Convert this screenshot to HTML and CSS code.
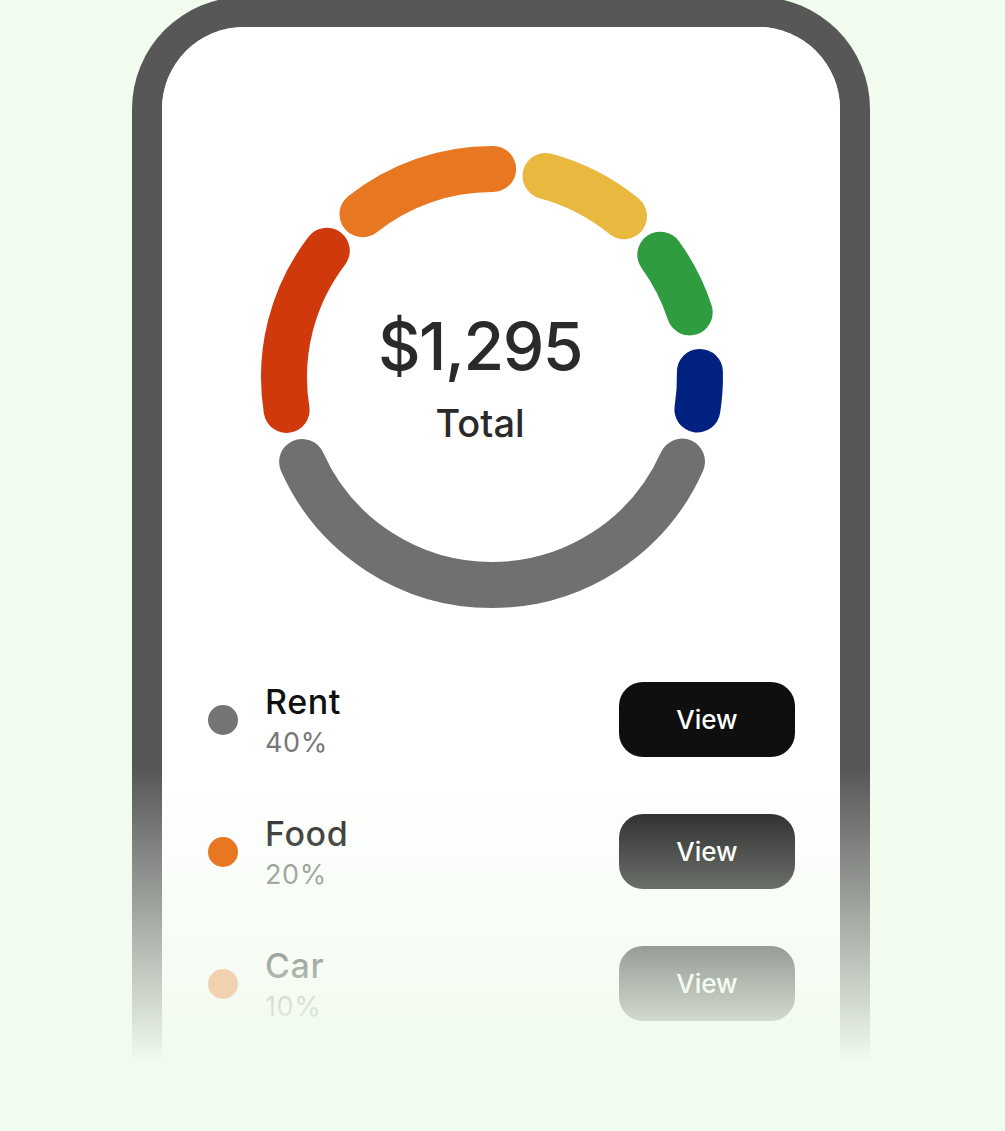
FILE: index.html
```html
<!DOCTYPE HTML>
<html>
<head>
<link rel="stylesheet" href="styles.css">
</head>
<body>
<div class="phone">
  <div class="screen">
    <svg class="chart" width="678" height="613" viewBox="0 0 678 613">
      <g fill="none" stroke-width="46" stroke-linecap="round">
        <path stroke="#707070" d="M520 434.6 A208 208 0 0 1 140.1 434.9"/>
        <path stroke="#d0390b" d="M124.6 382.9 A208 208 0 0 1 164.8 223.7"/>
        <path stroke="#e87722" d="M200.5 187.2 A208 208 0 0 1 331.1 142"/>
        <path stroke="#e9b83e" d="M383.5 149 A208 208 0 0 1 462 189.3"/>
        <path stroke="#2f9c3f" d="M498.3 227.7 A208 208 0 0 1 527.7 285.4"/>
        <path stroke="#00217f" d="M537.9 344.9 A208 208 0 0 1 535.4 382.5"/>
      </g>
      <text class="total-amount" x="318" y="343" text-anchor="middle">$1,295</text>
      <text class="total-label" x="318" y="410" text-anchor="middle">Total</text>
    </svg>

    <div class="legend">
      <div class="row">
        <span class="dot rent"></span>
        <div class="info">
          <p class="name">Rent</p>
          <p class="pct">40%</p>
        </div>
        <button class="view">View</button>
      </div>
      <div class="row">
        <span class="dot food"></span>
        <div class="info">
          <p class="name">Food</p>
          <p class="pct">20%</p>
        </div>
        <button class="view">View</button>
      </div>
      <div class="row">
        <span class="dot car"></span>
        <div class="info">
          <p class="name">Car</p>
          <p class="pct">10%</p>
        </div>
        <button class="view">View</button>
      </div>
    </div>
  </div>
</div>
<div class="fade"></div>
</body>
</html>
```

FILE: styles.css
```css
html, body {
  margin: 0;
  height: 100%;
  overflow: hidden;
}
body {
  background-color: #f1fbee;
  font-family: "Inter", "Liberation Sans", sans-serif;
}
.phone {
  width: 678px;
  margin-top: -3px;
  margin-left: 132px;
  border: 30px solid #575757;
  border-bottom: none;
  border-radius: 112px 112px 0 0;
  overflow: hidden;
}
.screen {
  background-color: #fff;
  height: 1104px;
}
.chart {
  display: block;
}
.total-amount {
  font-size: 66px;
  font-weight: 500;
  letter-spacing: -1.5px;
  fill: #2a2a2a;
}
.total-label {
  font-size: 38px;
  font-weight: 500;
  fill: #2a2a2a;
}
.legend {
  padding: 42px 45px 0 46px;
  display: flex;
  flex-direction: column;
  gap: 57px;
}
.row {
  display: flex;
  align-items: center;
  height: 75px;
}
.dot {
  width: 30px;
  height: 30px;
  border-radius: 50%;
  flex-shrink: 0;
  position: relative;
  z-index: 2;
}
.dot.rent { background-color: #747474; }
.dot.food { background-color: #e87722; }
.dot.car { background-color: #f2d1b0; }
.info {
  margin-left: 27px;
  flex: 1;
  padding-top: 4px;
}
.info p {
  margin: 0;
}
.name {
  font-size: 34px;
  line-height: 36px;
  font-weight: 500;
  color: #111;
  letter-spacing: 0.6px;
}
.pct {
  font-size: 27px;
  line-height: 34px;
  margin-top: 6px !important;
  color: #777;
  letter-spacing: 0.6px;
}
.view {
  width: 176px;
  height: 75px;
  border: none;
  border-radius: 24px;
  background-color: #0f0f0f;
  color: #fff;
  font-family: inherit;
  font-size: 26px;
  font-weight: 500;
  cursor: pointer;
}
.fade {
  position: absolute;
  top: 770px;
  left: 0;
  right: 0;
  bottom: 0;
  background: linear-gradient(to bottom, rgba(241, 251, 238, 0) 0, #f1fbee 292px);
}
```
